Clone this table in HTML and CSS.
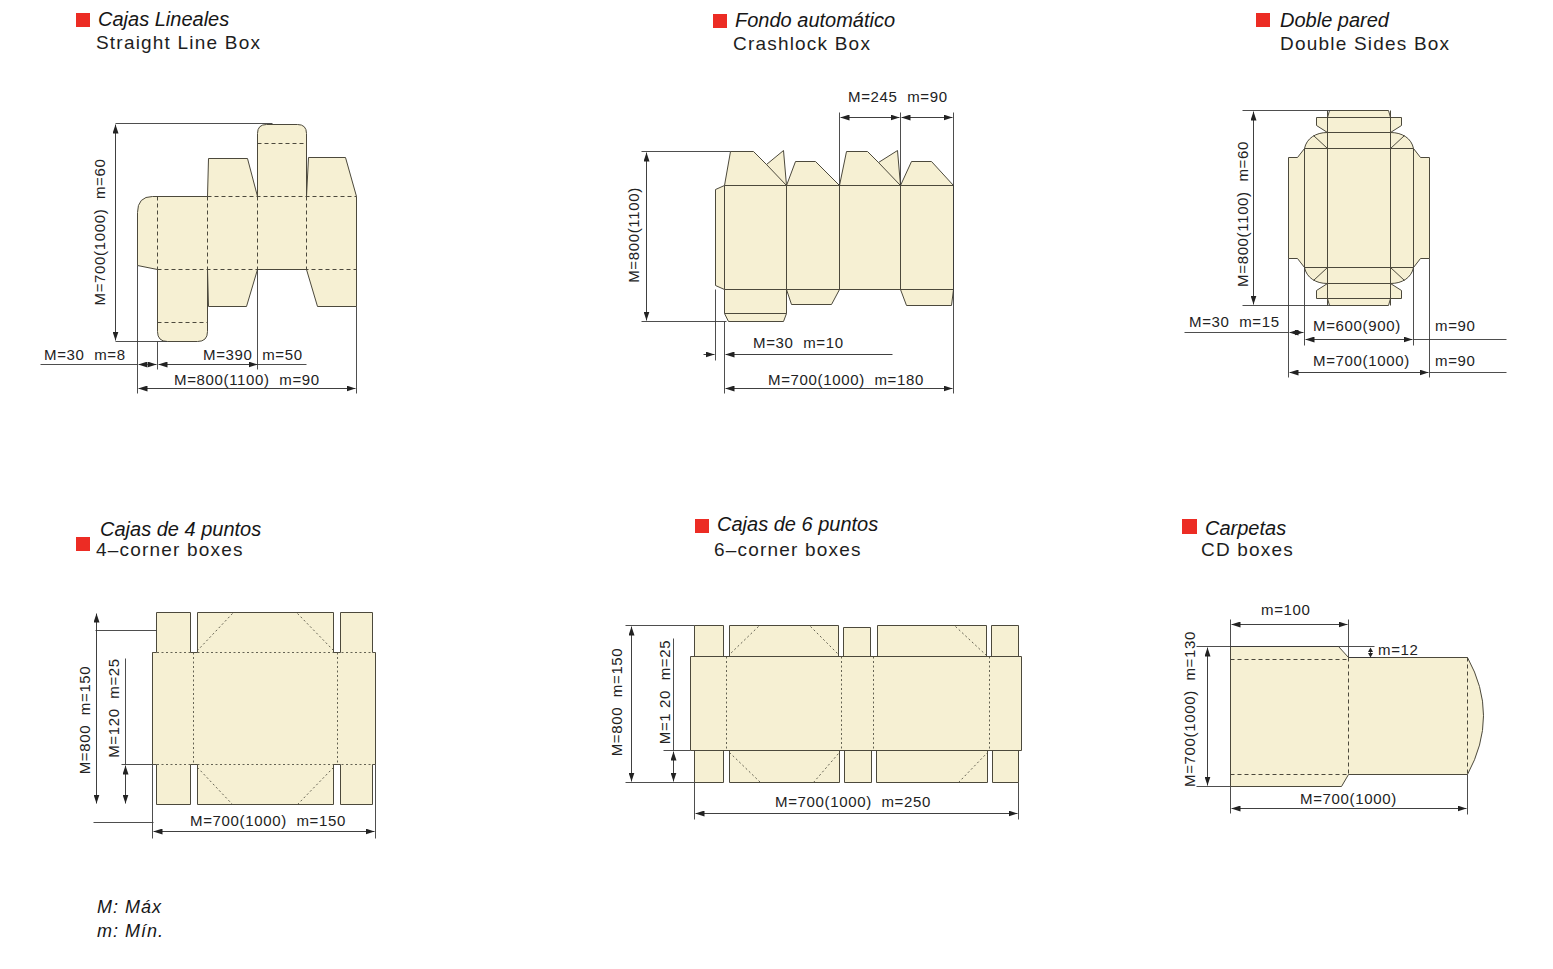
FILE: index.html
```html
<!DOCTYPE html>
<html lang="es">
<head>
<meta charset="utf-8">
<title>Tipos de cajas</title>
<link rel="stylesheet" href="styles.css">
</head>
<body>
<main class="sheet">

  <section class="fig fig-1 row1">
    <div class="fig-title">
      <span class="swatch"></span>
      <div class="names"><p class="es">Cajas Lineales</p><p class="en">Straight Line Box</p></div>
    </div>
    <svg class="drawing" width="560" height="416" viewBox="0 54 560 416">
      <defs>
        <marker id="ar" viewBox="0 0 9 6" refX="9" refY="3" markerWidth="9" markerHeight="6" markerUnits="userSpaceOnUse" orient="auto-start-reverse">
          <path d="M0,0 L9,3 L0,6 Z" fill="#222"/>
        </marker>
      </defs>
      <g transform="translate(.5 .5)">
        <path class="cut" d="M137,212 Q137,196 152,196 L207,196 L208,158 L247,158 L257,196 L257,133 Q257,124 266,124 L297,124 Q306,124 306,133 L306,196 L308,157 L345,157 L356,196 L356,306 L317,306 L306,269 L257,269 L246,306 L208,306 L207,269 L207,331 Q207,341 197,341 L167,341 Q157,341 157,331 L157,269 L137,265 Z"/>
        <path class="fold" d="M157,196 V269 M207,196 V269 M257,196 V269 M306,196 V269 M207,196 H356 M157,269 H356 M257,143 H306 M157,322 H207"/>
        <path class="ext" d="M115,123 H272 M115,341 H167 M137,265 V393 M157,341 V369 M257,269 V369 M356,306 V393 M40,364 H137 M257,364 H306"/>
        <line class="dim" x1="115" y1="124" x2="115" y2="340" marker-start="url(#ar)" marker-end="url(#ar)"/>
        <line class="dim" x1="147" y1="364" x2="138" y2="364" marker-end="url(#ar)"/>
        <line class="dim" x1="147" y1="364" x2="156" y2="364" marker-end="url(#ar)"/>
        <line class="dim" x1="158" y1="364" x2="257" y2="364" marker-start="url(#ar)" marker-end="url(#ar)"/>
        <line class="dim" x1="138" y1="388" x2="355" y2="388" marker-start="url(#ar)" marker-end="url(#ar)"/>
      </g>
      <text class="lbl" transform="translate(105 232) rotate(-90)" text-anchor="middle">M=700(1000)  m=60</text>
      <text class="lbl" x="44" y="360">M=30  m=8</text>
      <text class="lbl" x="203" y="360">M=390  m=50</text>
      <text class="lbl" x="174" y="385">M=800(1100)  m=90</text>
    </svg>
  </section>

  <section class="fig fig-2 row1">
    <div class="fig-title">
      <span class="swatch"></span>
      <div class="names"><p class="es">Fondo automático</p><p class="en">Crashlock Box</p></div>
    </div>
    <svg class="drawing" width="590" height="416" viewBox="560 54 590 416">
      <g transform="translate(.5 .5)">
        <path class="cut" d="M724,185 L715,189 L715,285 L724,289 L724,313 L728,321 L783,321 L786,313 L786,289 L791,304 L831,304 L839,289 L900,289 L906,305 L951,305 L953,289 L953,185 L931,161 L911,161 L900,185 L897,150 L878,162 L867,151 L846,151 L839,185 L815,161 L795,161 L786,185 L783,150 L766,164 L753,151 L730,151 Z"/>
        <path class="crease" d="M724,185 H953 M724,289 H953 M724,313 H786 M724,185 V289 M786,185 V289 M839,185 V289 M900,185 V289 M766,164 L786,185 M878,162 L900,185"/>
        <path class="ext" d="M641,151 H730 M641,321 H726 M839,112 V185 M900,112 V185 M953,112 V393 M715,289 V360 M724,321 V393"/>
        <line class="dim" x1="646" y1="152" x2="646" y2="320" marker-start="url(#ar)" marker-end="url(#ar)"/>
        <line class="dim" x1="840" y1="117" x2="899" y2="117" marker-start="url(#ar)" marker-end="url(#ar)"/>
        <line class="dim" x1="901" y1="117" x2="952" y2="117" marker-start="url(#ar)" marker-end="url(#ar)"/>
        <line class="dim" x1="703" y1="354" x2="714" y2="354" marker-end="url(#ar)"/>
        <line class="dim" x1="892" y1="354" x2="725" y2="354" marker-end="url(#ar)"/>
        <line class="dim" x1="725" y1="388" x2="952" y2="388" marker-start="url(#ar)" marker-end="url(#ar)"/>
      </g>
      <text class="lbl" transform="translate(639 235) rotate(-90)" text-anchor="middle">M=800(1100)</text>
      <text class="lbl" x="848" y="102">M=245  m=90</text>
      <text class="lbl" x="753" y="348">M=30  m=10</text>
      <text class="lbl" x="768" y="385">M=700(1000)  m=180</text>
    </svg>
  </section>

  <section class="fig fig-3 row1">
    <div class="fig-title">
      <span class="swatch"></span>
      <div class="names"><p class="es">Doble pared</p><p class="en">Double Sides Box</p></div>
    </div>
    <svg class="drawing" width="403" height="416" viewBox="1150 54 403 416">
      <g transform="translate(.5 .5)">
        <path class="cut" d="M1327,117 L1329,110 L1388,110 L1390,117 L1401,117 L1401,125 L1390,132 C1402,132 1411,138 1413,148 L1420,157 L1429,157 L1429,258 L1420,258 L1413,267 C1411,277 1402,283 1390,283 L1401,290 L1401,298 L1390,298 L1388,305 L1329,305 L1327,298 L1316,298 L1316,290 L1327,283 C1315,283 1306,277 1304,267 L1297,258 L1288,258 L1288,157 L1297,157 L1304,148 C1306,138 1315,132 1327,132 L1316,125 L1316,117 Z"/>
        <path class="crease" d="M1327,110 V305 M1390,110 V305 M1304,148 V267 M1413,148 V267 M1327,117 H1390 M1327,132 H1390 M1304,148 H1413 M1304,267 H1413 M1327,283 H1390 M1327,298 H1390 M1313,135 L1327,148 M1404,135 L1390,148 M1313,280 L1327,267 M1404,280 L1390,267"/>
        <path class="ext" d="M1242,110 H1330 M1242,305 H1330 M1288,258 V377 M1304,267 V345 M1413,267 V345 M1429,258 V377 M1184,332 H1288 M1413,339 H1506 M1429,372 H1506"/>
        <line class="dim" x1="1253" y1="111" x2="1253" y2="304" marker-start="url(#ar)" marker-end="url(#ar)"/>
        <line class="dim" x1="1296" y1="332" x2="1289" y2="332" marker-end="url(#ar)"/>
        <line class="dim" x1="1296" y1="332" x2="1303" y2="332" marker-end="url(#ar)"/>
        <line class="dim" x1="1305" y1="339" x2="1412" y2="339" marker-start="url(#ar)" marker-end="url(#ar)"/>
        <line class="dim" x1="1289" y1="372" x2="1428" y2="372" marker-start="url(#ar)" marker-end="url(#ar)"/>
      </g>
      <text class="lbl" transform="translate(1248 214) rotate(-90)" text-anchor="middle">M=800(1100)  m=60</text>
      <text class="lbl" x="1189" y="327">M=30  m=15</text>
      <text class="lbl" x="1313" y="331">M=600(900)</text>
      <text class="lbl" x="1435" y="331">m=90</text>
      <text class="lbl" x="1313" y="366">M=700(1000)</text>
      <text class="lbl" x="1435" y="366">m=90</text>
    </svg>
  </section>

  <section class="fig fig-4 row2">
    <div class="fig-title">
      <span class="swatch"></span>
      <div class="names"><p class="es">Cajas de 4 puntos</p><p class="en">4–corner boxes</p></div>
    </div>
    <svg class="drawing" width="560" height="310" viewBox="0 560 560 310">
      <g transform="translate(.5 .5)">
        <path class="cut" d="M152,652 H156 V612 H190 V652 H197 V612 H333 V652 H340 V612 H372 V652 H375 V764 H372 V804 H340 V764 H333 V804 H197 V764 H190 V804 H156 V764 H152 Z"/>
        <path class="dot" d="M152,652 H375 M152,764 H375 M193,652 V764 M337,652 V764 M232,613 L197,650 M297,613 L333,650 M197,767 L232,804 M297,804 L333,767"/>
        <path class="ext" d="M95,630 H156 M125,658 V764 M121,764 H152 M93,822 H153 M152,764 V838 M375,764 V838"/>
        <line class="dim" x1="96" y1="613" x2="96" y2="803" marker-start="url(#ar)" marker-end="url(#ar)"/>
        <line class="dim" x1="125" y1="765" x2="125" y2="803" marker-start="url(#ar)" marker-end="url(#ar)"/>
        <line class="dim" x1="153" y1="831" x2="374" y2="831" marker-start="url(#ar)" marker-end="url(#ar)"/>
      </g>
      <text class="lbl" transform="translate(90 720) rotate(-90)" text-anchor="middle">M=800  m=150</text>
      <text class="lbl" transform="translate(119 708) rotate(-90)" text-anchor="middle">M=120  m=25</text>
      <text class="lbl" x="190" y="826">M=700(1000)  m=150</text>
    </svg>
  </section>

  <section class="fig fig-5 row2">
    <div class="fig-title">
      <span class="swatch"></span>
      <div class="names"><p class="es">Cajas de 6 puntos</p><p class="en">6–corner boxes</p></div>
    </div>
    <svg class="drawing" width="590" height="310" viewBox="560 560 590 310">
      <g transform="translate(.5 .5)">
        <rect class="cut" x="694" y="625" width="29" height="31"/>
        <rect class="cut" x="729" y="625" width="109" height="31"/>
        <rect class="cut" x="843" y="627" width="27" height="29"/>
        <rect class="cut" x="877" y="625" width="109" height="31"/>
        <rect class="cut" x="991" y="625" width="27" height="31"/>
        <rect class="cut" x="694" y="750" width="29" height="32"/>
        <rect class="cut" x="729" y="750" width="110" height="32"/>
        <rect class="cut" x="844" y="750" width="27" height="32"/>
        <rect class="cut" x="876" y="750" width="111" height="32"/>
        <rect class="cut" x="992" y="750" width="26" height="32"/>
        <rect class="cut" x="690" y="656" width="331" height="94"/>
        <path class="dot" d="M726,656 V750 M841,656 V750 M873,656 V750 M989,656 V750 M758,626 L729,654 M810,626 L838,654 M729,752 L760,782 M813,782 L838,753 M955,626 L986,655 M958,782 L988,751"/>
        <path class="ext" d="M625,625 H694 M625,782 H694 M673,638 V750 M663,750 H690 M694,782 V819 M1018,782 V819"/>
        <line class="dim" x1="631" y1="626" x2="631" y2="781" marker-start="url(#ar)" marker-end="url(#ar)"/>
        <line class="dim" x1="673" y1="751" x2="673" y2="781" marker-start="url(#ar)" marker-end="url(#ar)"/>
        <line class="dim" x1="695" y1="813" x2="1017" y2="813" marker-start="url(#ar)" marker-end="url(#ar)"/>
      </g>
      <text class="lbl" transform="translate(622 702) rotate(-90)" text-anchor="middle">M=800  m=150</text>
      <text class="lbl" transform="translate(670 692) rotate(-90)" text-anchor="middle">M=1 20  m=25</text>
      <text class="lbl" x="775" y="807">M=700(1000)  m=250</text>
    </svg>
  </section>

  <section class="fig fig-6 row2">
    <div class="fig-title">
      <span class="swatch"></span>
      <div class="names"><p class="es">Carpetas</p><p class="en">CD boxes</p></div>
    </div>
    <svg class="drawing" width="403" height="310" viewBox="1150 560 403 310">
      <g transform="translate(.5 .5)">
        <path class="cut" d="M1230,646 H1338 L1348,657 H1467 Q1499,715 1467,774 H1348 L1341,786 H1230 Z"/>
        <path class="fold" d="M1230,659 H1348 M1230,774 H1348 M1348,657 V774 M1467,657 V774"/>
        <path class="ext" d="M1196,646 H1374 M1196,786 H1230 M1230,619 V646 M1348,619 V657 M1348,657 H1375 M1230,786 V813 M1467,774 V814 M1370,651 V653"/>
        <path class="tip" d="M1370,647 L1367.5,651.5 H1372.5 Z M1370,657 L1367.5,652.5 H1372.5 Z"/>
        <line class="dim" x1="1207" y1="647" x2="1207" y2="785" marker-start="url(#ar)" marker-end="url(#ar)"/>
        <line class="dim" x1="1231" y1="624" x2="1347" y2="624" marker-start="url(#ar)" marker-end="url(#ar)"/>
        <line class="dim" x1="1231" y1="808" x2="1466" y2="808" marker-start="url(#ar)" marker-end="url(#ar)"/>
      </g>
      <text class="lbl" transform="translate(1195 709) rotate(-90)" text-anchor="middle">M=700(1000)  m=130</text>
      <text class="lbl" x="1261" y="615">m=100</text>
      <text class="lbl" x="1378" y="655">m=12</text>
      <text class="lbl" x="1300" y="804">M=700(1000)</text>
    </svg>
  </section>

</main>
<footer class="legend">
  <p>M: Máx</p>
  <p>m: Mín.</p>
</footer>
</body>
</html>
```

FILE: styles.css
```css
html, body {
  margin: 0;
  padding: 0;
  background: #ffffff;
}

body {
  font-family: "Liberation Sans", Arial, sans-serif;
  color: #1e1e1e;
  width: 1553px;
}

.sheet {
  display: grid;
  grid-template-columns: 560px 590px 403px;
  grid-template-rows: 470px 400px;
}

.fig {
  display: flex;
  flex-direction: column;
}

.fig-title {
  display: flex;
  align-items: flex-start;
  gap: 8px;
  box-sizing: border-box;
}

.row1 .fig-title { height: 54px; }
.row2 .fig-title { height: 90px; }

.swatch {
  flex: none;
  width: 14px;
  height: 14px;
  background: #ec2c24;
}

.names p { margin: 0; white-space: nowrap; }

.es {
  font-style: italic;
  font-size: 20px;
  line-height: 20px;
  color: #161616;
}

.en {
  font-size: 19px;
  line-height: 20px;
  letter-spacing: 1.2px;
  color: #1e1e1e;
  margin-top: 4px !important;
}

/* per-figure title placement */
.fig-1 .fig-title { padding: 9px 0 0 76px; }
.fig-1 .swatch { margin-top: 4px; }
.fig-1 .en { margin-left: -2px; }

.fig-2 .fig-title { padding: 10px 0 0 153px; }
.fig-2 .swatch { margin-top: 4px; }
.fig-2 .en { margin-left: -2px; }

.fig-3 .fig-title { padding: 10px 0 0 106px; gap: 10px; }
.fig-3 .swatch { margin-top: 3px; }

.fig-4 .fig-title { padding: 49px 0 0 76px; gap: 10px; }
.fig-4 .swatch { margin-top: 18px; }
.fig-4 .en { margin-top: 1px !important; margin-left: -4px; }

.fig-5 .fig-title { padding: 44px 0 0 135px; }
.fig-5 .swatch { margin-top: 5px; }
.fig-5 .en { margin-top: 6px !important; margin-left: -3px; }

.fig-6 .fig-title { padding: 48px 0 0 32px; gap: 8px; }
.fig-6 .swatch { margin-top: 1px; width: 15px; height: 15px; }
.fig-6 .en { margin-top: 2px !important; margin-left: -4px; }

.drawing {
  display: block;
  overflow: visible;
}

/* drawing styles */
.cut {
  fill: #f6f0d3;
  stroke: #4c493c;
  stroke-width: 1;
  stroke-linejoin: round;
}

.crease {
  fill: none;
  stroke: #4c493c;
  stroke-width: 1;
}

.fold {
  fill: none;
  stroke: #4c493c;
  stroke-width: 1;
  stroke-dasharray: 4 3;
}

.dot {
  fill: none;
  stroke: #555244;
  stroke-width: 0.9;
  stroke-dasharray: 2 2.5;
}

.ext {
  fill: none;
  stroke: #3a3a3a;
  stroke-width: 0.9;
}

.dim {
  fill: none;
  stroke: #2a2a2a;
  stroke-width: 0.9;
}

.tip { fill: #222; }

.lbl {
  font-family: "Liberation Sans", Arial, sans-serif;
  font-size: 15px;
  letter-spacing: 0.65px;
  fill: #222;
  white-space: pre;
}

/* legend */
.legend {
  padding: 25px 0 0 97px;
}

.legend p {
  margin: 0;
  font-style: italic;
  font-size: 18px;
  line-height: 24px;
  letter-spacing: 1px;
  color: #161616;
}
```
